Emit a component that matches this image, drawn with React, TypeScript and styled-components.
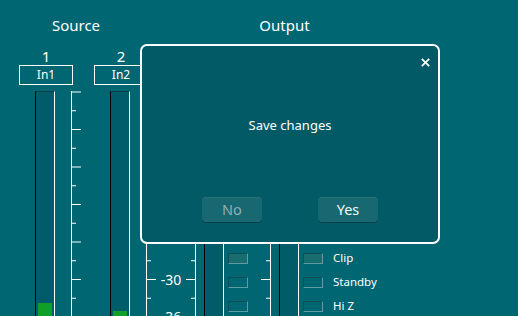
import styled, { createGlobalStyle } from "styled-components";

const GlobalStyle = createGlobalStyle`
  html, body {
    margin: 0;
    height: 100%;
  }
  body {
    background: #006672;
    overflow: hidden;
    font-family: "Noto Sans", "Open Sans", sans-serif;
    color: #ffffff;
  }
`;

const Page = styled.div`
  position: relative;
  width: 518px;
  height: 316px;
  overflow: hidden;
`;

const HeaderRow = styled.div`
  display: flex;
  height: 50px;
`;

const SectionTitle = styled.div<{ $width: number }>`
  width: ${(p) => p.$width}px;
  text-align: center;
  line-height: 50px;
  font-size: 15px;
`;

const Body = styled.div`
  display: flex;
  align-items: flex-start;
  padding-left: 19px;
`;

const Group = styled.div`
  display: flex;
  gap: 13px;
`;

const Strip = styled.div`
  width: 62px;
  display: flex;
  flex-direction: column;
`;

const ChannelNumber = styled.div`
  width: 54px;
  height: 15px;
  line-height: 12px;
  font-size: 15px;
  text-align: center;
`;

const ChannelName = styled.div`
  box-sizing: border-box;
  width: 54px;
  height: 20px;
  border: 1px solid #ffffff;
  font-size: 12px;
  line-height: 18px;
  text-align: center;
`;

const MeterRow = styled.div<{ $source?: boolean }>`
  display: flex;
  align-items: flex-start;
  margin-top: 6px;
  padding-left: ${(p) => (p.$source ? 16 : 0)}px;
  gap: ${(p) => (p.$source ? 16 : 8)}px;
`;

const Meter = styled.div`
  box-sizing: border-box;
  width: 20px;
  height: 240px;
  background: #005c68;
  border-left: 1px solid #000000;
  border-right: 1px solid #ffffff;
  border-top: 1px solid #003e48;
  display: flex;
  flex-direction: column;
  justify-content: flex-end;
  padding: 0 2px;
`;

const Level = styled.div`
  background: #10a028;
`;

const ScaleSvg = styled.svg`
  display: block;
  flex: none;
`;

const DbColumn = styled.div`
  width: 30px;
  display: flex;
  flex-direction: column;
  padding-top: 23.25px;
`;

const DbLabel = styled.div`
  height: 37.5px;
  line-height: 37.5px;
  text-align: center;
  font-size: 14px;
`;

const LedColumn = styled.div`
  display: flex;
  flex-direction: column;
  gap: 13px;
  padding-top: 162px;
  margin-left: -4px;
`;

const Led = styled.div<{ $lit?: boolean }>`
  box-sizing: border-box;
  width: 20px;
  height: 11px;
  border: 1px solid;
  border-color: #0b4c55 #5f9ca3 #5f9ca3 #0b4c55;
  background: ${(p) => (p.$lit ? "#186e6e" : "transparent")};
`;

const Legend = styled.div`
  display: flex;
  flex-direction: column;
  gap: 13px;
  margin-left: 10px;
  padding-top: 202px;
`;

const LegendItem = styled.div`
  height: 11px;
  line-height: 11px;
  font-size: 11.5px;
  white-space: nowrap;
`;

const Dialog = styled.div`
  position: absolute;
  left: 140px;
  top: 44px;
  width: 300px;
  height: 200px;
  box-sizing: border-box;
  border: 2px solid #ffffff;
  border-radius: 7px;
  background: #015a66;
  display: flex;
  flex-direction: column;
`;

const DialogHeader = styled.div`
  display: flex;
  justify-content: flex-end;
  padding: 8px 5px 0 0;
`;

const CloseButton = styled.button`
  width: 16px;
  height: 16px;
  padding: 0;
  border: none;
  background: none;
  display: flex;
  align-items: center;
  justify-content: center;
`;

const Message = styled.div`
  margin-top: 46px;
  line-height: 18px;
  font-size: 13px;
  text-align: center;
`;

const ButtonRow = styled.div`
  display: flex;
  justify-content: center;
  gap: 56px;
  margin-top: 63px;
`;

const DialogButton = styled.button<{ $disabled?: boolean }>`
  width: 60px;
  height: 25px;
  border: none;
  border-radius: 4px;
  background: #176870;
  box-shadow: 0 1px 0 #08404a, inset 0 1px 0 rgba(255, 255, 255, 0.08);
  font-family: "Noto Sans", "Open Sans", sans-serif;
  font-size: 14.5px;
  line-height: 25px;
  padding: 0;
  color: ${(p) => (p.$disabled ? "#8db0b5" : "#f4f8f8")};
`;

function Scale({ side }: { side: "left" | "right" }) {
  const x0 = side === "right" ? 0.5 : 9.5;
  return (
    <ScaleSvg width={10} height={240} viewBox="0 0 10 240">
      <line x1={x0} y1={0} x2={x0} y2={240} stroke="#fff" strokeWidth={1} />
      {Array.from({ length: 13 }, (_, i) => {
        const y = 1 + i * 18.75;
        const len = i % 2 === 0 ? 10 : 5;
        const xa = side === "right" ? 0 : 10 - len;
        const xb = side === "right" ? len : 10;
        return <line key={i} x1={xa} y1={y} x2={xb} y2={y} stroke="#fff" strokeWidth={1} />;
      })}
    </ScaleSvg>
  );
}

const sources = [
  { num: "1", name: "In1", level: 28 },
  { num: "2", name: "In2", level: 20 },
];

const outputs = [
  { num: "1", name: "Out1" },
  { num: "2", name: "Out2" },
];

// the scale is only labelled where the reference shows a value
const dbMarks = ["0", "-6", "-12", "-18", "", "-30", "-36"];
const ledNames = ["Clip", "Standby", "Hi Z"];

export default function App() {
  return (
    <Page>
      <GlobalStyle />
      <HeaderRow>
        <SectionTitle $width={152}>Source</SectionTitle>
        <SectionTitle $width={265}>Output</SectionTitle>
      </HeaderRow>
      <Body>
        <Group>
          {sources.map((s) => (
            <Strip key={s.num}>
              <ChannelNumber>{s.num}</ChannelNumber>
              <ChannelName>{s.name}</ChannelName>
              <MeterRow $source>
                <Meter>
                  <Level style={{ height: s.level }} />
                </Meter>
                <Scale side="right" />
              </MeterRow>
            </Strip>
          ))}
        </Group>
        <DbColumn>
          {dbMarks.map((m, i) => (
            <DbLabel key={i}>{m}</DbLabel>
          ))}
        </DbColumn>
        <Group>
          {outputs.map((o) => (
            <Strip key={o.num}>
              <ChannelNumber>{o.num}</ChannelNumber>
              <ChannelName>{o.name}</ChannelName>
              <MeterRow>
                <Scale side="left" />
                <Meter />
                <LedColumn>
                  {ledNames.map((n, i) => (
                    <Led key={n} $lit={i === 0} />
                  ))}
                </LedColumn>
              </MeterRow>
            </Strip>
          ))}
        </Group>
        <Legend>
          {ledNames.map((n) => (
            <LegendItem key={n}>{n}</LegendItem>
          ))}
        </Legend>
      </Body>

      <Dialog>
        <DialogHeader>
          <CloseButton>
            <svg width="9" height="9" viewBox="0 0 9 9">
              <path d="M0.8 0.8 L8.2 8.2 M8.2 0.8 L0.8 8.2" stroke="#fff" strokeWidth="1.7" />
            </svg>
          </CloseButton>
        </DialogHeader>
        <Message>Save changes</Message>
        <ButtonRow>
          <DialogButton $disabled>No</DialogButton>
          <DialogButton>Yes</DialogButton>
        </ButtonRow>
      </Dialog>
    </Page>
  );
}
